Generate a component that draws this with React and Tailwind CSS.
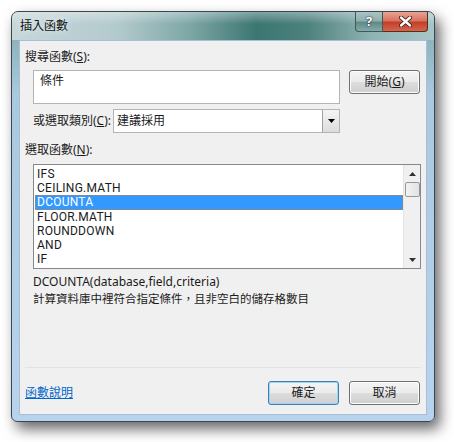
import React from "react";

const items = ["IFS", "CEILING.MATH", "DCOUNTA", "FLOOR.MATH", "ROUNDDOWN", "AND", "IF"];

const Win7Button = ({ children, primary }) => (
  <button
    className={`w-[71px] h-[24px] rounded-[3px] border text-[12px] text-[#1e1e1e] flex items-center justify-center bg-[linear-gradient(#f4f4f4_0%,#ebebeb_48%,#dddddd_52%,#cfcfcf_100%)] ${
      primary
        ? "border-[#3c7fb1] shadow-[inset_0_0_0_1px_#9fd6f5]"
        : "border-[#707070] shadow-[inset_0_0_0_1px_#fcfcfc]"
    }`}
  >
    {children}
  </button>
);

const App = () => {
  return (
    <div className="w-[454px] h-[442px] bg-white pt-[11px] pl-[11px] font-['Noto_Sans','Noto_Sans_CJK_TC',sans-serif] text-[12px] text-[#1b1b1b]">
      <div className="relative w-[424px] h-[411px] rounded-t-[7px] rounded-b-[6px] border border-[#3b4650] bg-[linear-gradient(#7fa9ab_0%,#a9c9de_20%,#b8d3ee_100%)] shadow-[5px_7px_14px_rgba(0,0,0,0.6)] flex flex-col">
        {/* title bar */}
        <div className="h-[28px] rounded-t-[6px] bg-[linear-gradient(90deg,#c6d7da_0%,#b3cacd_25%,#7ea7a6_42%,#3b7671_58%,#4d817d_70%,#8fb3b2_85%,#a9c6c7_100%)] relative shrink-0">
          <div className="absolute inset-x-0 top-0 h-[12px] rounded-t-[6px] bg-[linear-gradient(rgba(255,255,255,0.35),rgba(255,255,255,0))]" />
          <span className="absolute left-[8px] top-[6px] text-[12px] leading-[16px] text-[#111] [text-shadow:0_0_6px_rgba(255,255,255,0.9)]">
            插入函數
          </span>
          <div className="absolute right-[6px] top-0 flex">
            <div className="w-[28px] h-[20px] rounded-bl-[4px] border border-t-0 border-[#3f5959] bg-[linear-gradient(#a9c4c4_0%,#8fb0b0_45%,#5f8a88_55%,#86aaa9_100%)] flex items-center justify-center">
              <span className="text-[13px] font-bold leading-none text-white [text-shadow:0_0_2px_#223,0_0_1px_#223]">?</span>
            </div>
            <div className="w-[45px] h-[20px] rounded-br-[4px] border border-l-0 border-t-0 border-[#5a2a24] bg-[linear-gradient(#e8a393_0%,#d9735f_45%,#c2402a_55%,#d4664c_100%)] flex items-center justify-center">
              <svg width="13" height="11" viewBox="0 0 13 11">
                <path d="M2 1.5 L11 9.5 M11 1.5 L2 9.5" stroke="#3a1510" strokeWidth="4" strokeLinecap="round" />
                <path d="M2 1.5 L11 9.5 M11 1.5 L2 9.5" stroke="#ffffff" strokeWidth="2.4" strokeLinecap="round" />
              </svg>
            </div>
          </div>
        </div>

        {/* client area */}
        <div className="mx-[7px] w-[408px] h-[375px] bg-[#f0f0f0] border border-[#a7bed6] flex flex-col pl-[5px]">
          <div className="mt-[8px] leading-[16px]">
            搜尋函數(<span className="underline">S</span>):
          </div>
          <div className="mt-[5px] ml-[8px] flex gap-[9px]">
            <div className="w-[307px] h-[34px] bg-white border border-[#b4b4b4] px-[6px] py-[2px] leading-[16px]">條件</div>
            <Win7Button>
              開始(<span className="underline">G</span>)
            </Win7Button>
          </div>
          <div className="mt-[5px] ml-[8px] flex items-center">
            <span className="w-[80px] leading-[16px]">
              或選取類別(<span className="underline">C</span>):
            </span>
            <div className="w-[227px] h-[24px] bg-white border border-[#b4b4b4] flex items-center">
              <span className="flex-1 pl-[3px] leading-[16px]">建議採用</span>
              <div className="w-[17px] h-[22px] border-l border-[#a0a0a0] bg-[linear-gradient(#f5f5f5,#dcdcdc)] flex items-center justify-center">
                <svg width="7" height="4" viewBox="0 0 7 4">
                  <path d="M0 0 H7 L3.5 4 Z" fill="#000" />
                </svg>
              </div>
            </div>
          </div>
          <div className="mt-[9px] leading-[16px]">
            選取函數(<span className="underline">N</span>):
          </div>
          <div className="mt-[6px] ml-[8px] w-[388px] h-[105px] bg-white border border-[#828790] flex">
            <div className="flex-1 pt-[2px] pl-[1px] font-['Roboto',sans-serif] tracking-[0.25px]">
              {items.map((it) => (
                <div
                  key={it}
                  className={`h-[14.2px] leading-[14.2px] pl-[2px] ${
                    it === "DCOUNTA" ? "bg-[#3399ff] text-white outline-1 outline-dotted outline-[#c08040] -outline-offset-1" : ""
                  }`}
                >
                  {it}
                </div>
              ))}
            </div>
            <div className="w-[17px] bg-[#f0f0f0] border-l border-[#e4e4e4] flex flex-col items-center">
              <div className="h-[17px] flex items-center justify-center">
                <svg width="7" height="4" viewBox="0 0 7 4">
                  <path d="M0 4 H7 L3.5 0 Z" fill="#333" />
                </svg>
              </div>
              <div className="w-[15px] h-[15px] rounded-[2px] border border-[#979797] bg-[linear-gradient(90deg,#f3f3f3,#e2e2e2)]" />
              <div className="flex-1" />
              <div className="h-[17px] flex items-center justify-center">
                <svg width="7" height="4" viewBox="0 0 7 4">
                  <path d="M0 0 H7 L3.5 4 Z" fill="#333" />
                </svg>
              </div>
            </div>
          </div>
          <div className="mt-[5px] ml-[8px] leading-[16px]">DCOUNTA(database,field,criteria)</div>
          <div className="mt-[1px] ml-[8px] leading-[16px] text-[11.5px]">計算資料庫中裡符合指定條件，且非空白的儲存格數目</div>
          <div className="mt-[60px] w-[396px] h-px bg-[#dfe3e8]" />
          <div className="mt-[13px] flex items-center">
            <span className="text-[#0066cc] underline leading-[16px]">函數說明</span>
            <div className="ml-auto mr-[6px] flex gap-[10px]">
              <Win7Button primary>確定</Win7Button>
              <Win7Button>取消</Win7Button>
            </div>
          </div>
        </div>
      </div>
    </div>
  );
};

export default App;
